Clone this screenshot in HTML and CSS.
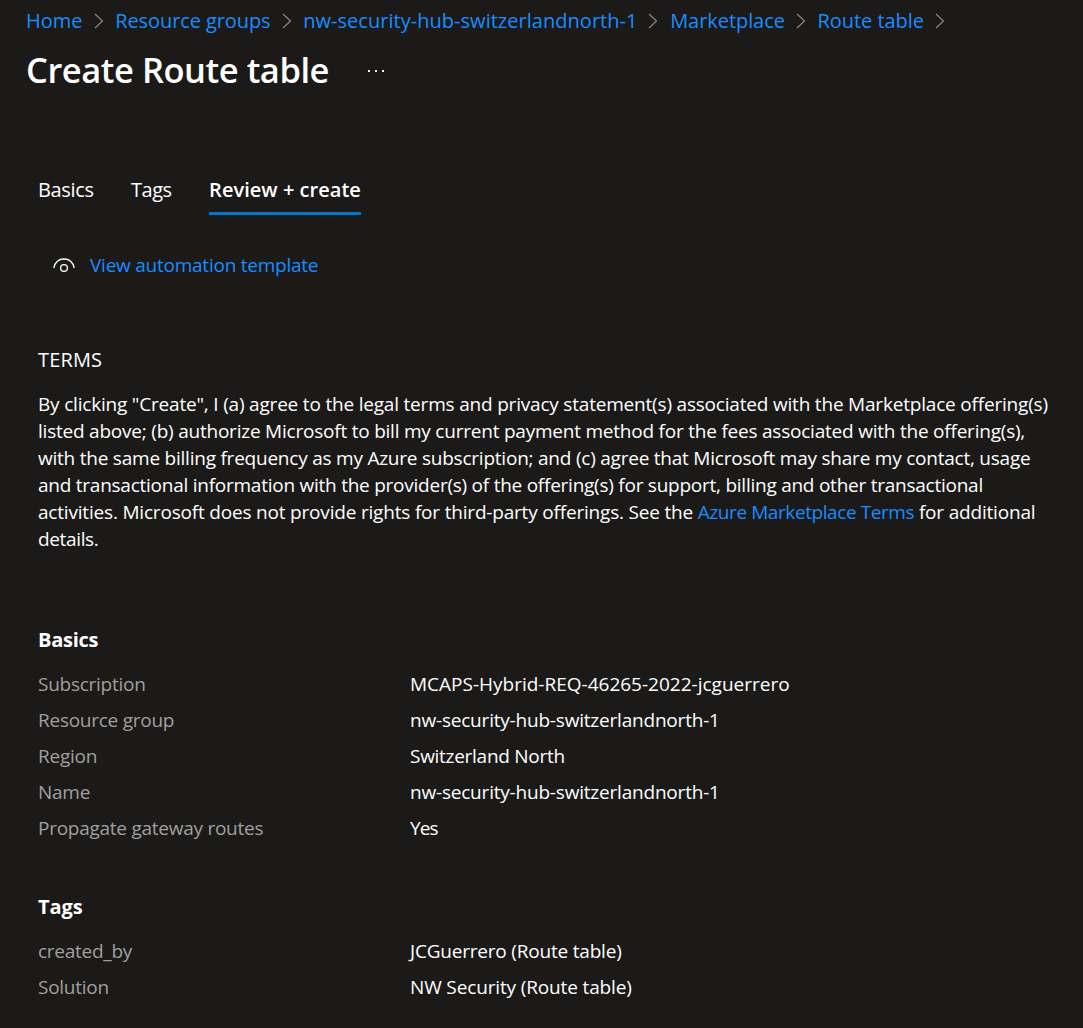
FILE: index.html
```html
<!DOCTYPE html>
<html lang="en">
<head>
<meta charset="utf-8">
<title>Create Route table</title>
<link rel="stylesheet" href="styles.css">
</head>
<body>
<nav class="breadcrumb">
<a class="crumb crumb-home">Home</a><svg class="chevron" viewBox="0 0 10 16"><path d="M1 1l7.500 7L1 15"/></svg>
<a class="crumb crumb-groups">Resource groups</a><svg class="chevron" viewBox="0 0 10 16"><path d="M1 1l7.500 7L1 15"/></svg>
<a class="crumb crumb-hub">nw-security-hub-switzerlandnorth-1</a><svg class="chevron" viewBox="0 0 10 16"><path d="M1 1l7.500 7L1 15"/></svg>
<a class="crumb crumb-market">Marketplace</a><svg class="chevron" viewBox="0 0 10 16"><path d="M1 1l7.500 7L1 15"/></svg>
<a class="crumb crumb-route">Route table</a><svg class="chevron" viewBox="0 0 10 16"><path d="M1 1l7.500 7L1 15"/></svg>
</nav>
<header class="title-row">
<h1 class="title">Create Route table</h1>
<svg class="more" viewBox="0 0 18 4"><path d="M1 1h2v2H1zM8 1h2v2H8zM15 1h2v2h-2z"/></svg>
</header>
<main class="content">
<div class="tabs"><a class="tab tab-basics">Basics</a><a class="tab tab-tags">Tags</a><a class="tab tab-active">Review + create</a></div>
<div class="template">
<svg class="eye" viewBox="0 0 24 16"><path d="M1.800 11C3 5.400 7 2 12 2s9 3.400 10.200 9"/><circle cx="12" cy="11" r="3.400"/></svg>
<a class="template-link">View automation template</a>
</div>
<h2 class="terms-heading">TERMS</h2>
<p class="terms"><span class="line l1">By clicking "Create", I (a) agree to the legal terms and privacy statement(s) associated with the Marketplace offering(s)</span>
<span class="line l2">listed above; (b) authorize Microsoft to bill my current payment method for the fees associated with the offering(s),</span>
<span class="line l3">with the same billing frequency as my Azure subscription; and (c) agree that Microsoft may share my contact, usage</span>
<span class="line l4">and transactional information with the provider(s) of the offering(s) for support, billing and other transactional</span>
<span class="line l5">activities. Microsoft does not provide rights for third-party offerings. See the <a class="terms-link">Azure Marketplace Terms</a> for additional</span>
<span class="line l6">details.</span></p>
<h3 class="section-heading section-basics">Basics</h3>
<dl class="details">
<dt>Subscription</dt><dd class="value-subscription">MCAPS-Hybrid-REQ-46265-2022-jcguerrero</dd>
<dt>Resource group</dt><dd>nw-security-hub-switzerlandnorth-1</dd>
<dt>Region</dt><dd class="value-region">Switzerland North</dd>
<dt>Name</dt><dd>nw-security-hub-switzerlandnorth-1</dd>
<dt>Propagate gateway routes</dt><dd class="value-propagate">Yes</dd>
</dl>
<h3 class="section-heading section-tags">Tags</h3>
<dl class="details">
<dt>created_by</dt><dd>JCGuerrero (Route table)</dd>
<dt>Solution</dt><dd class="value-solution">NW Security (Route table)</dd>
</dl>
</main>
</body>
</html>
```
FILE: styles.css
```css
* { box-sizing: border-box; }
body { margin: 0; height: 1028px; overflow: hidden; background: #1b1a19; color: #fff; font-family: "Open Sans", "Noto Sans", sans-serif; font-size: 19px; }
h1, h2, h3, p, dl, dd { margin: 0; }

.breadcrumb { display: flex; align-items: center; height: 41px; padding-left: 26px; color: #1a8cff; font-size: 20px; white-space: nowrap; }
.crumb-groups { letter-spacing: -0.09px; }
.crumb-hub { letter-spacing: 0.03px; }
.crumb-market, .crumb-route { letter-spacing: -0.06px; }
.chevron { flex: none; width: 10px; height: 16px; margin: 0 11.7px 0 11px; fill: none; stroke: #8a8886; stroke-width: 1.2; }

.title-row { display: flex; align-items: center; height: 60px; padding-left: 26px; }
.title { padding-bottom: 4px; font-size: 34.5px; font-weight: 600; letter-spacing: -0.46px; white-space: nowrap; }
.more { width: 18px; height: 4px; margin-left: 38.5px; fill: #fff; }

.content { padding: 68px 0 0 38px; }
.tabs { display: flex; gap: 37.5px; height: 46px; font-size: 20px; line-height: 42px; }
.tab-basics { letter-spacing: -0.36px; }
.tab-tags { letter-spacing: -0.5px; }
.tab-active { font-weight: 600; letter-spacing: 0.03px; border-bottom: 3px solid #0078d4; }

.template { display: flex; align-items: center; gap: 14px; height: 28px; margin: 36px 0 0 14px; color: #1a8cff; }
.template-link { padding-bottom: 1px; letter-spacing: -0.24px; }
.eye { width: 24px; height: 16px; fill: none; stroke: #fff; stroke-width: 1.3; }

.terms-heading { margin-top: 67px; font-size: 20px; font-weight: 400; line-height: 28px; letter-spacing: 0.15px; }
.terms { margin-top: 17px; line-height: 27px; white-space: nowrap; }
.line { display: block; }
.l1 { letter-spacing: -0.195px; }
.l2 { letter-spacing: -0.22px; }
.l3 { letter-spacing: -0.227px; }
.l4 { letter-spacing: -0.247px; }
.l5 { letter-spacing: -0.19px; }
.l6 { letter-spacing: -0.35px; }
.terms-link { color: #1a8cff; letter-spacing: -0.42px; }

.section-heading { font-size: 20px; font-weight: 700; line-height: 28px; letter-spacing: -0.25px; }
.section-basics { margin-top: 73px; }
.section-tags { margin-top: 47px; letter-spacing: -0.1px; }
.details { display: grid; grid-template-columns: 372px 1fr; margin-top: 12px; line-height: 36px; }
dt { color: #a19f9d; letter-spacing: -0.26px; }
dd { letter-spacing: -0.2px; }
.value-subscription { letter-spacing: 0; }
.value-region { letter-spacing: -0.28px; }
.value-propagate { letter-spacing: -0.9px; }
.value-solution { letter-spacing: -0.14px; }
```
